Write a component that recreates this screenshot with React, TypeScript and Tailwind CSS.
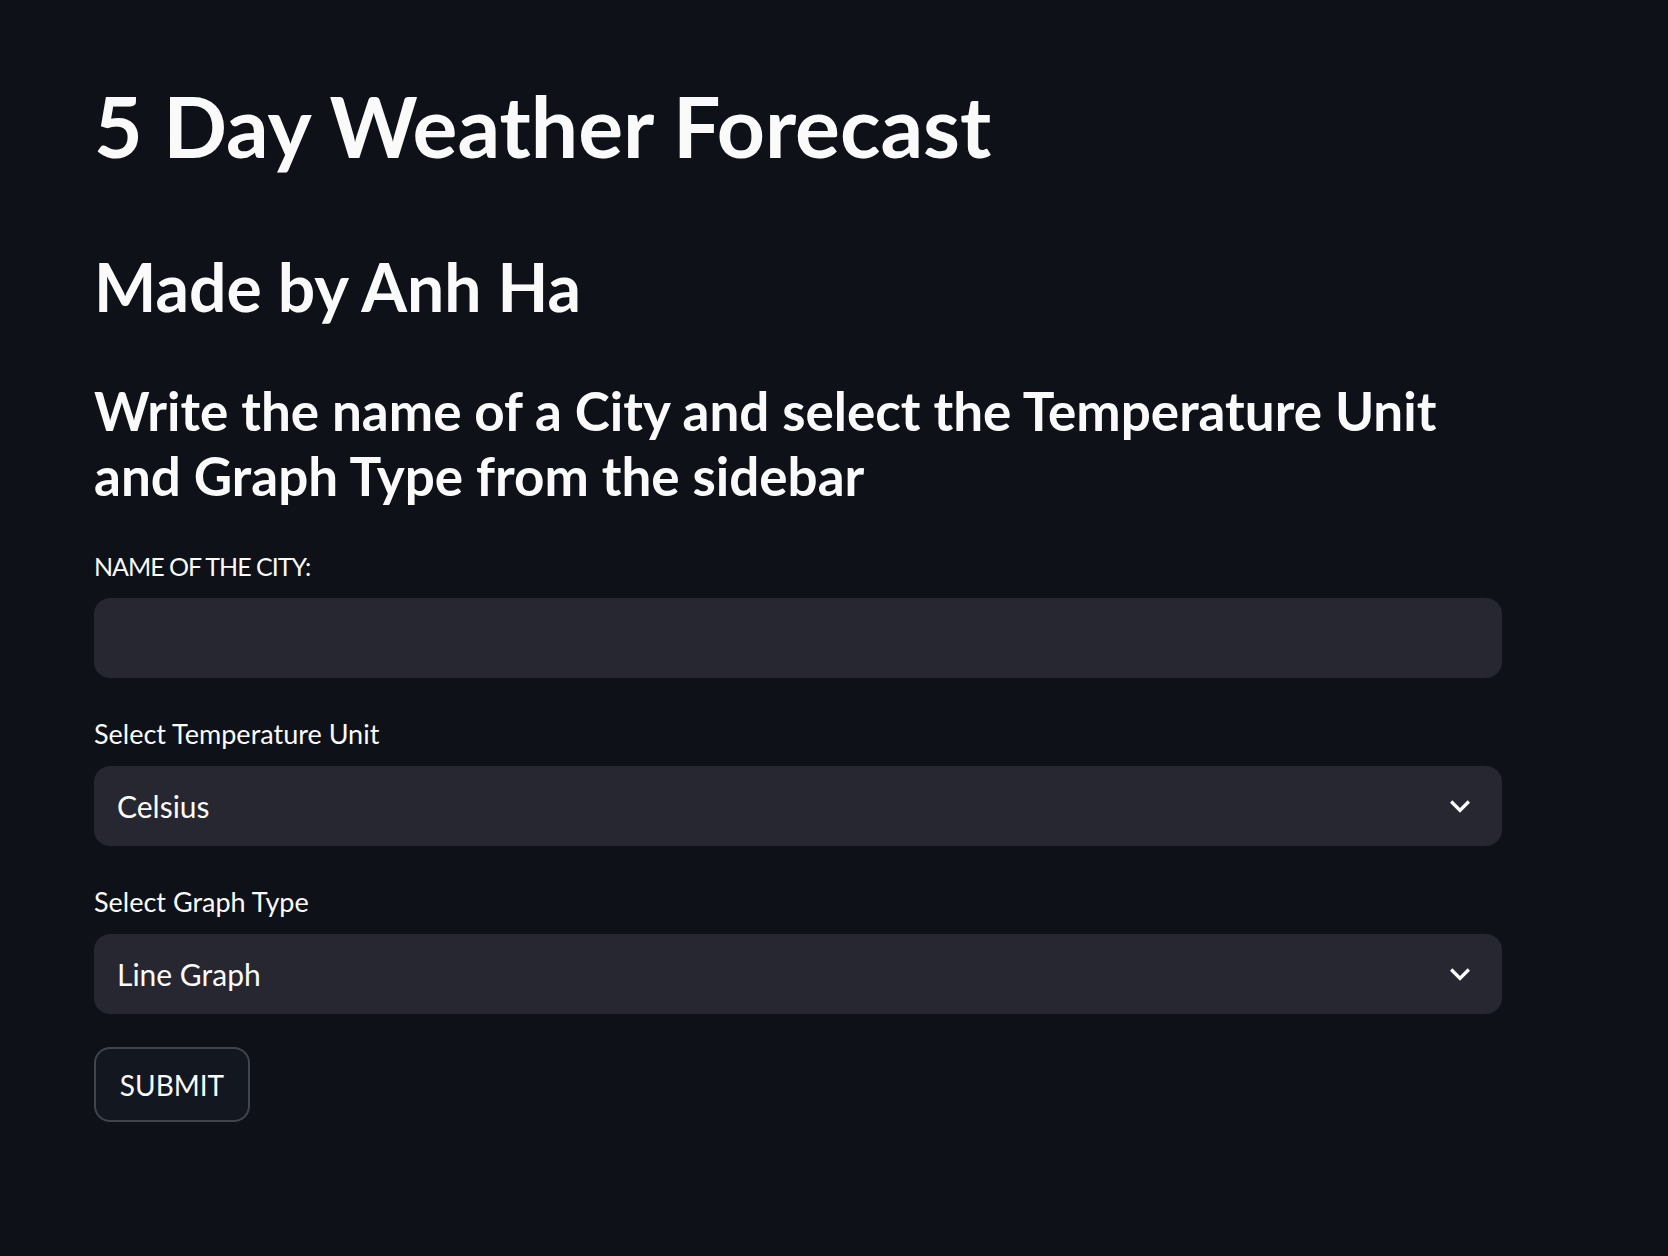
const selects = [
  { label: "Select Temperature Unit", value: "Celsius" },
  { label: "Select Graph Type", value: "Line Graph" },
];

function Chevron() {
  return (
    <svg viewBox="0 0 24 24" className="w-[40px] h-[40px] fill-[#fafafa]">
      <path d="M7.41 8.59L12 13.17l4.59-4.58L18 10l-6 6-6-6 1.41-1.41z" />
    </svg>
  );
}

export default function App() {
  return (
    <div className="min-h-[1256px] bg-[#0e1117] text-[#fafafa] font-['Lato',sans-serif]">
      <div className="w-[1408px] ml-[94px] pt-[76px]">
        <h1 className="text-[84px] leading-[100px] font-bold">5 Day Weather Forecast</h1>
        <h2 className="mt-[71px] text-[66px] leading-[80px] font-bold">Made by Anh Ha</h2>
        <h3 className="mt-[51px] text-[53px] leading-[65px] font-bold">
          Write the name of a City and select the Temperature Unit
          <br />
          and Graph Type from the sidebar
        </h3>

        <label className="block mt-[42px] text-[25px] leading-[32px] tracking-[-1px]">NAME OF THE CITY:</label>
        <div className="mt-[16px] h-[80px] rounded-2xl bg-[#262730]" />

        {selects.map((s) => (
          <div key={s.label}>
            <label className="block mt-[40px] text-[27px] leading-[32px]">{s.label}</label>
            <div className="mt-[16px] h-[80px] rounded-2xl bg-[#262730] flex items-center justify-between pl-[23px] pr-[22px]">
              <span className="text-[30px]">{s.value}</span>
              <Chevron />
            </div>
          </div>
        ))}

        <button className="mt-[33px] w-[156px] h-[75px] rounded-2xl border-2 border-[rgba(250,250,250,0.2)] bg-[#131720] text-[28px] flex items-center justify-center">
          SUBMIT
        </button>
      </div>
    </div>
  );
}
